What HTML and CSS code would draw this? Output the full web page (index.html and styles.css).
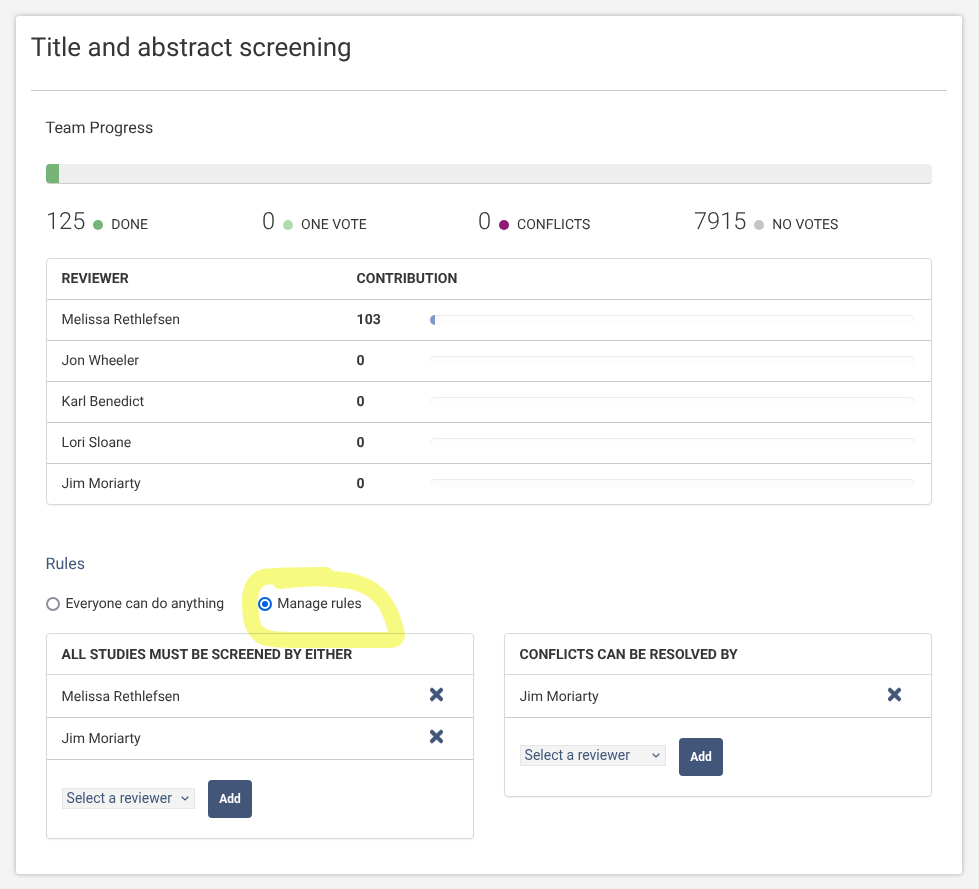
FILE: index.html
```html
<!DOCTYPE html>
<html lang="en">
<head>
<meta charset="utf-8">
<title>Title and abstract screening</title>
<link rel="stylesheet" href="styles.css">
</head>
<body>
<main class="card">
  <h1 class="title">Title and abstract screening</h1>
  <hr class="rule">
  <section class="content">
    <h2 class="team-heading">Team Progress</h2>
    <div class="progress"><div class="progress-fill"></div></div>
    <div class="stats">
      <div class="stat"><span class="stat-num">125</span><span class="dot dot-done"></span><span class="stat-label">DONE</span></div>
      <div class="stat"><span class="stat-num">0</span><span class="dot dot-one"></span><span class="stat-label">ONE VOTE</span></div>
      <div class="stat"><span class="stat-num">0</span><span class="dot dot-conflict"></span><span class="stat-label">CONFLICTS</span></div>
      <div class="stat"><span class="stat-num">7915</span><span class="dot dot-none"></span><span class="stat-label">NO VOTES</span></div>
    </div>
    <div class="panel table">
      <div class="trow thead"><span class="col-name">REVIEWER</span><span>CONTRIBUTION</span></div>
      <div class="trow"><span class="col-name">Melissa Rethlefsen</span><b class="col-num">103</b><span class="meter"><span class="meter-fill"></span></span></div>
      <div class="trow"><span class="col-name">Jon Wheeler</span><b class="col-num">0</b><span class="meter"></span></div>
      <div class="trow"><span class="col-name">Karl Benedict</span><b class="col-num">0</b><span class="meter"></span></div>
      <div class="trow"><span class="col-name">Lori Sloane</span><b class="col-num">0</b><span class="meter"></span></div>
      <div class="trow"><span class="col-name">Jim Moriarty</span><b class="col-num">0</b><span class="meter"></span></div>
    </div>
    <h2 class="rules-heading">Rules</h2>
    <div class="radios">
      <label class="radio"><input type="radio" name="rules"><span>Everyone can do anything</span></label>
      <label class="radio"><input type="radio" name="rules" checked><span>Manage rules</span></label>
    </div>
    <div class="rule-columns">
      <div class="panel">
        <div class="panel-head">ALL STUDIES MUST BE SCREENED BY EITHER</div>
        <div class="person"><span>Melissa Rethlefsen</span><svg class="x" viewBox="0 0 352 512"><path d="M242.72 256l100.07-100.07c12.28-12.28 12.28-32.19 0-44.48l-22.24-22.24c-12.28-12.28-32.19-12.28-44.48 0L176 189.28 75.93 89.21c-12.28-12.28-32.19-12.28-44.48 0L9.21 111.45c-12.28 12.28-12.28 32.19 0 44.48L109.28 256 9.21 356.07c-12.28 12.28-12.28 32.19 0 44.48l22.24 22.24c12.28 12.28 32.2 12.28 44.48 0L176 322.72l100.07 100.07c12.28 12.28 32.2 12.28 44.48 0l22.24-22.24c12.28-12.28 12.28-32.19 0-44.48L242.72 256z"/></svg></div>
        <div class="person"><span>Jim Moriarty</span><svg class="x" viewBox="0 0 352 512"><path d="M242.72 256l100.07-100.07c12.28-12.28 12.28-32.19 0-44.48l-22.24-22.24c-12.28-12.28-32.19-12.28-44.48 0L176 189.28 75.93 89.21c-12.28-12.28-32.19-12.28-44.48 0L9.21 111.45c-12.28 12.28-12.28 32.19 0 44.48L109.28 256 9.21 356.07c-12.28 12.28-12.28 32.19 0 44.48l22.24 22.24c12.28 12.28 32.2 12.28 44.48 0L176 322.72l100.07 100.07c12.28 12.28 32.2 12.28 44.48 0l22.24-22.24c12.28-12.28 12.28-32.19 0-44.48L242.72 256z"/></svg></div>
        <div class="add-row">
          <div class="picker picker-narrow"><select class="picker-select"><option>Select a reviewer</option></select><svg class="chevron" viewBox="0 0 8 5"><path d="M.7.8 4 4 7.3.8"/></svg></div>
          <button class="add" type="button">Add</button>
        </div>
      </div>
      <div class="panel">
        <div class="panel-head">CONFLICTS CAN BE RESOLVED BY</div>
        <div class="person"><span>Jim Moriarty</span><svg class="x" viewBox="0 0 352 512"><path d="M242.72 256l100.07-100.07c12.28-12.28 12.28-32.19 0-44.48l-22.24-22.24c-12.28-12.28-32.19-12.28-44.48 0L176 189.28 75.93 89.21c-12.28-12.28-32.19-12.28-44.48 0L9.21 111.45c-12.28 12.28-12.28 32.19 0 44.48L109.28 256 9.21 356.07c-12.28 12.28-12.28 32.19 0 44.48l22.24 22.24c12.28 12.28 32.2 12.28 44.48 0L176 322.72l100.07 100.07c12.28 12.28 32.2 12.28 44.48 0l22.24-22.24c12.28-12.28 12.28-32.19 0-44.48L242.72 256z"/></svg></div>
        <div class="add-row">
          <div class="picker picker-wide"><select class="picker-select"><option>Select a reviewer</option></select><svg class="chevron" viewBox="0 0 8 5"><path d="M.7.8 4 4 7.3.8"/></svg></div>
          <button class="add" type="button">Add</button>
        </div>
      </div>
    </div>
  </section>
</main>
<svg class="highlight" width="979" height="889" viewBox="0 0 979 889"><path d="M326 575C300 575 280 575 264 577C254 580 250 590 250 600C250 615 251 626 258 633C265 640 280 640 300 640L390 640C397 640 398 636 396 630C392 617 390 610 383 600C375 590 365 584 350 581C325 577 300 578 280 581"/></svg>
</body>
</html>
```
FILE: styles.css
```css
* { box-sizing: border-box; }
html, body { margin: 0; padding: 0; }
body {
  position: relative;
  height: 889px;
  padding: 16px 17px 15px 16px;
  overflow: hidden;
  background: #f3f3f3;
  color: #363636;
  font-family: Roboto, "Liberation Sans", sans-serif;
  font-size: 14px;
  text-rendering: geometricPrecision;
}
.card {
  height: 858px;
  padding: 15px 15px 0;
  background: #fff;
  border-radius: 3px;
  box-shadow: 0 0 5px rgba(0, 0, 0, .3);
}
.title { margin: 0 0 0 -.3px; height: 33px; padding-top: 1px; font-size: 26px; line-height: 33px; font-weight: 400; color: #363636; }
.rule { margin: 26px 0 0; border: 0; border-top: 1px solid #c9c9c9; }
.content { padding: 0 15px; }
.team-heading { margin: 27px 0 0 -.4px; font-size: 16px; line-height: 19px; font-weight: 400; }
.progress {
  height: 20px;
  margin-top: 27px;
  background: #eee;
  border-bottom: 1px solid #ccc;
  border-radius: 4px;
  overflow: hidden;
}
.progress-fill { width: 13px; height: 100%; background: #77b477; }
.stats { display: grid; grid-template-columns: repeat(4, 216px); height: 74px; padding-top: 24px; }
.stat { display: flex; align-items: center; height: 26px; }
.stat-num { font-size: 23.6px; line-height: 26px; font-weight: 300; color: #363636; }
.stat-label { margin-top: 8px; font-size: 14px; line-height: 16px; }
.dot { width: 10px; height: 10px; margin: 7px 8.5px 0 7.5px; border-radius: 50%; }
.dot-done { background: #77b477; }
.dot-one { background: #aedcae; }
.dot-conflict { background: #8f1a6f; }
.dot-none { background: #c4c4c4; }
.panel { border: 1px solid #d9d9d9; border-radius: 4px; box-shadow: 0 1px 2px rgba(0, 0, 0, .06); align-self: start; }
.trow { display: flex; align-items: center; height: 41px; padding: 0 16px 0 14.6px; border-top: 1px solid #c9c9c9; }
.trow:first-child { height: 40px; border-top: 0; }
.thead { font-weight: 700; color: #363636; }
.col-name { width: 295px; flex: none; }
.col-num { width: 73.4px; flex: none; }
.meter {
  flex: 1;
  height: 10px;
  border-radius: 5px;
  background: #fdfdfd;
  box-shadow: inset 0 1px 1px rgba(0, 0, 0, .08);
  overflow: hidden;
}
.meter-fill { display: block; width: 5px; height: 100%; background: #7f97cb; }
.rules-heading { margin: 49px 0 0 -.4px; font-size: 16px; line-height: 19px; font-weight: 400; color: #3f5779; }
.radios { display: flex; gap: 33.5px; height: 20px; margin-top: 21px; }
.radio { display: flex; align-items: center; gap: 5.5px; color: #363636; }
.radio input {
  appearance: none;
  display: grid;
  place-items: center;
  width: 14px;
  height: 14px;
  margin: 0 0 0 0;
  background: #fff;
  border: 2px solid #8f8f9d;
  border-radius: 50%;
}
.radio input:checked { border-color: #0060df; }
.radio input:checked::before { content: ""; width: 6px; height: 6px; border-radius: 50%; background: #0060df; }
.rule-columns { display: grid; grid-template-columns: 428px 428px; gap: 30px; margin-top: 19px; }
.panel-head { display: flex; align-items: center; height: 41px; padding: 2px 15px 0 14.6px; font-weight: 700; border-bottom: 1px solid #d9d9d9; }
.person {
  display: flex;
  justify-content: space-between;
  height: 42.5px;
  padding: 2px 30px 0 14.6px;
  align-items: center;
  border-bottom: 1px solid #c9c9c9;
}
.x { width: 13px; height: 19px; margin-top: -5px; fill: #415678; stroke: #415678; stroke-width: 24; flex: none; }
.add-row { display: flex; align-items: flex-start; gap: 13px; height: 78px; padding: 20px 15px 0; }
.picker { position: relative; height: 21px; margin-top: 7.5px; }
.picker-narrow { width: 133px; }
.picker-wide { width: 146px; }
.picker-select {
  appearance: none;
  display: block;
  width: 100%;
  height: 100%;
  padding: 0 0 1px 3.6px;
  font-family: inherit;
  font-size: 14px;
  color: #3f5779;
  background: #f3f3f3;
  border: 1px solid #e6e6e6;
  border-radius: 0;
}
.chevron { position: absolute; right: 6px; top: 8px; width: 8px; height: 5px; fill: none; stroke: #3f5779; stroke-width: 1.2; pointer-events: none; }
.add {
  width: 44px;
  height: 38px;
  padding: 0;
  font-family: inherit;
  font-size: 12px;
  font-weight: 700;
  color: #fff;
  background: #415678;
  border: 0;
  border-radius: 4px;
}
.highlight { position: absolute; left: 0; top: 0; pointer-events: none; mix-blend-mode: multiply; }
.highlight path { fill: none; stroke: #f7fa80; stroke-width: 16; stroke-linecap: round; stroke-linejoin: round; }
```
